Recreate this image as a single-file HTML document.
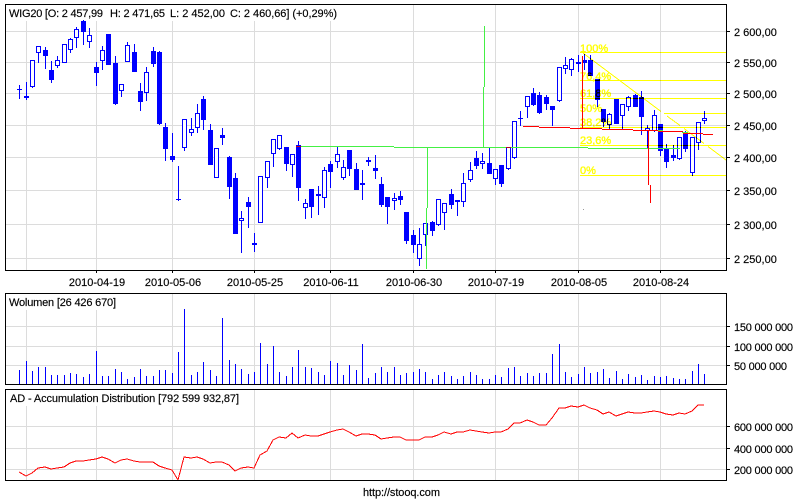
<!DOCTYPE html>
<html><head><meta charset="utf-8"><title>WIG20</title>
<style>
html,body{margin:0;padding:0;background:#fff;width:800px;height:500px;overflow:hidden}
svg{display:block}
text{font-family:"Liberation Sans",Arial,sans-serif;font-size:11px;fill:#000;stroke:#000;stroke-width:.15;white-space:pre}
.fib text{fill:#ff0;stroke:#ff0;stroke-width:.35}
</style></head><body>
<svg width="800" height="500" viewBox="0 0 800 500" xmlns="http://www.w3.org/2000/svg">
<rect width="800" height="500" fill="#fff"/>
<g shape-rendering="crispEdges" fill="none">
<path stroke="#dcdcdc" d="M26.5 5V270M96.5 5V270M172.5 5V270M254.5 5V270M330.5 5V270M413.5 5V270M495.5 5V270M578.5 5V270M660.5 5V270
M26.5 294V384M96.5 294V384M172.5 294V384M254.5 294V384M330.5 294V384M413.5 294V384M495.5 294V384M578.5 294V384M660.5 294V384
M26.5 390V480M96.5 390V480M172.5 390V480M254.5 390V480M330.5 390V480M413.5 390V480M495.5 390V480M578.5 390V480M660.5 390V480
M6 31.5H726M6 62.5H726M6 93.5H726M6 125.5H726M6 157.5H726M6 190.5H726M6 224.5H726M6 258.5H726
M6 326.5H726M6 346.5H726M6 365.5H726
M6 426.5H726M6 448.5H726M6 469.5H726"/>
<rect x="6" y="5" width="332" height="16" fill="#fff"/>
<rect x="6" y="294" width="112" height="16" fill="#fff"/>
<rect x="6" y="390" width="235" height="16" fill="#fff"/>
<!-- candle wicks -->
<path stroke="#0000ff" d="M19.5 85V99M26.5 82V100M32.5 60V88M38.5 46V63M45.5 47V69M51.5 61V83M57.5 56V68M64.5 44V63M70.5 38V53M76.5 27V48M83.5 20V45M89.5 28V48M96.5 62V86M102.5 46V70M108.5 34V65M115.5 56V105M121.5 84V97M127.5 42V62M134.5 44V72M140.5 83V111M146.5 67V101M153.5 47V67M159.5 51V125M165.5 123V161M172.5 133V162M178.5 166V201M184.5 119V151M191.5 118V136M197.5 104V133M203.5 96V130M210.5 124V165M216.5 148V178M222.5 128V145M229.5 156V199M235.5 173V234M241.5 211V253M248.5 197V228M254.5 233V252M260.5 176V223M267.5 161V188M273.5 139V167M279.5 135V150M286.5 147V171M292.5 154V177M298.5 141V201M305.5 199V219M311.5 189V218M318.5 186V215M324.5 167V208M330.5 161V188M337.5 146V168M343.5 160V180M349.5 150V176M356.5 163V190M362.5 170V200M368.5 157V166M375.5 155V179M381.5 177V207M387.5 197V224M394.5 193V210M400.5 191V205M406.5 212V244M413.5 230V253M419.5 228V266M425.5 223V246M432.5 221V236M438.5 199V226M444.5 203V230M451.5 189V209M457.5 200V216M463.5 173V207M470.5 162V182M476.5 151V169M482.5 153V169M489.5 147V174M495.5 169V185M501.5 165V187M508.5 147V170M514.5 121V159M520.5 111V126M527.5 96V118M533.5 88V106M539.5 92V114M546.5 95V110M552.5 106V126M559.5 67V102M565.5 57V74M571.5 58V76M578.5 55V72M584.5 54V70M590.5 55V76M597.5 79V107M603.5 109V127M609.5 113V129M616.5 99V124M622.5 104V129M628.5 96V111M635.5 94V107M641.5 91V135M647.5 125V149M654.5 110V132M660.5 124V156M666.5 144V168M673.5 145V161M679.5 137V160M685.5 131V152M692.5 137V176M698.5 122V150M704.5 111V124"/>
<!-- hollow bodies -->
<path fill="#fff" stroke="#0000ff" d="M30.5 60.5h4v26h-4zM36.5 46.5h4v6h-4zM55.5 60.5h4v5h-4zM62.5 44.5h4v18h-4zM68.5 39.5h4v10h-4zM74.5 29.5h4v8h-4zM87.5 35.5h4v6h-4zM100.5 50.5h4v10h-4zM119.5 84.5h4v6h-4zM125.5 45.5h4v16h-4zM144.5 72.5h4v20h-4zM182.5 119.5h4v28h-4zM189.5 129.5h4v3h-4zM195.5 113.5h4v14h-4zM214.5 148.5h4v29h-4zM239.5 218.5h4v2h-4zM258.5 176.5h4v46h-4zM265.5 161.5h4v16h-4zM271.5 139.5h4v14h-4zM277.5 135.5h4v13h-4zM290.5 154.5h4v10h-4zM303.5 203.5h4v4h-4zM322.5 170.5h4v27h-4zM335.5 154.5h4v7h-4zM341.5 167.5h4v10h-4zM392.5 198.5h4v2h-4zM417.5 244.5h4v14h-4zM423.5 223.5h4v11h-4zM436.5 199.5h4v25h-4zM442.5 203.5h4v9h-4zM461.5 183.5h4v18h-4zM468.5 170.5h4v9h-4zM480.5 161.5h4v2h-4zM493.5 169.5h4v9h-4zM506.5 147.5h4v21h-4zM512.5 121.5h4v36h-4zM525.5 96.5h4v10h-4zM557.5 67.5h4v33h-4zM563.5 65.5h4v3h-4zM569.5 59.5h4v10h-4zM607.5 114.5h4v10h-4zM620.5 104.5h4v11h-4zM626.5 97.5h4v9h-4zM645.5 128.5h4v2h-4zM652.5 115.5h4v15h-4zM677.5 137.5h4v21h-4zM690.5 137.5h4v35h-4zM696.5 122.5h4v20h-4zM702.5 118.5h4v2h-4z"/>
<!-- filled bodies -->
<path fill="#0000ff" d="M17 89h5v1h-5zM24 96h5v2h-5zM43 50h5v6h-5zM49 70h5v10h-5zM81 21h5v11h-5zM94 67h5v6h-5zM106 34h5v31h-5zM113 63h5v41h-5zM132 52h5v20h-5zM138 91h5v11h-5zM151 51h5v13h-5zM157 52h5v72h-5zM163 127h5v22h-5zM170 156h5v4h-5zM176 199h5v1h-5zM201 99h5v21h-5zM208 130h5v35h-5zM220 135h5v3h-5zM227 157h5v30h-5zM233 178h5v56h-5zM246 202h5v5h-5zM252 243h5v2h-5zM284 147h5v17h-5zM296 145h5v43h-5zM309 189h5v18h-5zM316 194h5v2h-5zM328 164h5v8h-5zM347 150h5v19h-5zM354 169h5v21h-5zM360 183h5v2h-5zM366 160h5v2h-5zM373 168h5v3h-5zM379 184h5v21h-5zM385 197h5v10h-5zM398 196h5v4h-5zM404 212h5v29h-5zM411 235h5v10h-5zM430 222h5v9h-5zM449 194h5v11h-5zM455 200h5v2h-5zM474 158h5v8h-5zM487 163h5v11h-5zM499 165h5v19h-5zM518 118h5v1h-5zM531 93h5v12h-5zM537 95h5v18h-5zM544 97h5v7h-5zM550 106h5v4h-5zM576 62h5v2h-5zM582 60h5v3h-5zM588 60h5v16h-5zM595 79h5v21h-5zM601 109h5v13h-5zM614 99h5v25h-5zM633 95h5v12h-5zM639 97h5v20h-5zM658 124h5v27h-5zM664 148h5v14h-5zM671 155h5v3h-5zM683 133h5v16h-5z"/>
<!-- fibonacci -->
<g class="fib" style="mix-blend-mode:multiply">
<path stroke="#ffff00" d="M580 52.5H726M580 80.5H726M580 98.5H726M664 113.5H726M580 127.5H726M580 145.5H726M580 175.5H726"/>
<path stroke="#ffff00" d="M583 53L661 111.5M667 116L680 125.5M684 128.5L704 143.5M708 146.5L726 160"/>
<text x="580" y="52">100%</text>
<text x="580" y="80">76,4%</text>
<text x="580" y="97">61,8%</text>
<text x="580" y="112">50%</text>
<text x="580" y="126">38,2%</text>
<text x="580" y="144">23,6%</text>
<text x="580" y="174">0%</text>
</g>
<!-- trend lines -->
<path stroke="#44f044" d="M298 146.5H394M394 147.5H588M588 148.5H680M427.5 147V208M426.5 208V269M483.5 87V147M484.5 26V87M645 130.5H663M682 132.5H688"/>
<path stroke="#ff0000" d="M523 126.5H539M539 127.5H570M570 128.5H602M602 129.5H633M633 130.5H658M658 131.5H683M683 133.5H703M703 134.5H713M582.5 56V128M648.5 131V185M650.5 185V203"/>
<path stroke="#c00020" d="M296 146.5h5M506 147.5h5"/>
<path stroke="#999" d="M583 209.5h1"/>
<!-- volume -->
<path stroke="#0000ff" d="M19.5 370V384M26.5 361V384M32.5 371V384M38.5 367V384M45.5 367V384M51.5 375V384M57.5 375V384M64.5 375V384M70.5 373V384M76.5 374V384M83.5 377V384M89.5 374V384M96.5 351V384M102.5 376V384M108.5 376V384M115.5 369V384M121.5 372V384M127.5 379V384M134.5 377V384M140.5 369V384M146.5 376V384M153.5 376V384M159.5 370V384M165.5 370V384M172.5 373V384M178.5 352V384M184.5 309V384M191.5 375V384M197.5 372V384M203.5 362V384M210.5 370V384M216.5 376V384M222.5 318V384M229.5 360V384M235.5 364V384M241.5 369V384M248.5 374V384M254.5 372V384M260.5 343V384M267.5 364V384M273.5 346V384M279.5 372V384M286.5 376V384M292.5 367V384M298.5 350V384M305.5 367V384M311.5 368V384M318.5 372V384M324.5 375V384M330.5 361V384M337.5 363V384M343.5 375V384M349.5 365V384M356.5 370V384M362.5 344V384M368.5 378V384M375.5 373V384M381.5 367V384M387.5 372V384M394.5 367V384M400.5 375V384M406.5 373V384M413.5 372V384M419.5 369V384M425.5 372V384M432.5 379V384M438.5 375V384M444.5 372V384M451.5 376V384M457.5 379V384M463.5 376V384M470.5 372V384M476.5 375V384M482.5 379V384M489.5 379V384M495.5 375V384M501.5 377V384M508.5 368V384M514.5 367V384M520.5 376V384M527.5 373V384M533.5 376V384M539.5 373V384M546.5 373V384M552.5 354V384M559.5 344V384M565.5 372V384M571.5 377V384M578.5 374V384M584.5 367V384M590.5 373V384M597.5 372V384M603.5 369V384M609.5 378V384M616.5 371V384M622.5 379V384M628.5 374V384M635.5 377V384M641.5 375V384M647.5 380V384M654.5 376V384M660.5 377V384M666.5 376V384M673.5 378V384M679.5 379V384M685.5 379V384M692.5 371V384M698.5 364V384M704.5 374V384"/>
<!-- AD -->
<polyline stroke="#ff0000" points="19,472 26,476 32,473 38,468 45,467 51,469 57,468 64,467 70,463 76,461 83,461 89,460 96,459 102,457 108,459 115,463 121,460 127,459 134,461 140,462 146,462 153,462 159,466 165,468 172,470 178,480 184,457 191,458 197,457 203,459 210,463 216,462 222,462 229,465 235,471 241,468 248,467 254,468 260,455 267,451 273,440 279,437 286,438 292,433 298,438 305,435 311,436 318,436 324,434 330,432 337,430 343,429 349,432 356,436 362,434 368,434 375,435 381,439 387,438 394,437 400,437 406,440 413,440 419,440 425,437 432,437 438,435 444,432 451,434 457,432 463,432 470,430 476,431 482,432 489,433 495,432 501,432 508,429 514,423 520,423 527,420 533,422 539,425 546,425 552,418 559,408 565,408 571,406 578,407 584,405 590,408 597,410 603,414 609,412 616,416 622,414 628,412 635,413 641,413 647,412 654,411 660,412 666,414 673,415 679,413 685,414 692,411 698,405 704,405"/>
<!-- frames and ticks -->
<path stroke="#000" d="M5.5 4.5H726.5V270.5H5.5zM5.5 293.5H726.5V384.5H5.5zM5.5 389.5H726.5V480.5H5.5z
M726 31.5h4M726 62.5h4M726 93.5h4M726 125.5h4M726 157.5h4M726 190.5h4M726 224.5h4M726 258.5h4
M726 326.5h4M726 346.5h4M726 365.5h4M726 426.5h4M726 448.5h4M726 469.5h4
M96.5 270v3M172.5 270v3M254.5 270v3M330.5 270v3M413.5 270v3M495.5 270v3M578.5 270v3M660.5 270v3"/>
</g>
<text x="9" y="17" textLength="94">WIG20 [O: 2 457,99</text>
<text x="110" y="17" textLength="55">H: 2 471,65</text>
<text x="170" y="17" textLength="55">L: 2 452,00</text>
<text x="230" y="17" textLength="107">C: 2 460,66] (+0,29%)</text>
<text x="9" y="306" textLength="107">Wolumen [26 426 670]</text>
<text x="10" y="402" textLength="229">AD - Accumulation Distribution [792 599 932,87]</text>
<g>
<text x="734" y="36">2 600,00</text>
<text x="734" y="67">2 550,00</text>
<text x="734" y="98">2 500,00</text>
<text x="734" y="130">2 450,00</text>
<text x="734" y="162">2 400,00</text>
<text x="734" y="195">2 350,00</text>
<text x="734" y="229">2 300,00</text>
<text x="734" y="263">2 250,00</text>
<text x="734" y="331" textLength="59">150 000 000</text>
<text x="734" y="351" textLength="59">100 000 000</text>
<text x="734" y="370" textLength="53">50 000 000</text>
<text x="734" y="431" textLength="59">600 000 000</text>
<text x="734" y="453" textLength="59">400 000 000</text>
<text x="734" y="474" textLength="59">200 000 000</text>
</g>
<g text-anchor="middle">
<text x="97" y="286">2010-04-19</text>
<text x="173" y="286">2010-05-06</text>
<text x="255" y="286">2010-05-25</text>
<text x="331" y="286">2010-06-11</text>
<text x="414" y="286">2010-06-30</text>
<text x="496" y="286">2010-07-19</text>
<text x="579" y="286">2010-08-05</text>
<text x="661" y="286">2010-08-24</text>
</g>
<text x="363" y="496" textLength="77">http://stooq.com</text>
</svg>
</body></html>
